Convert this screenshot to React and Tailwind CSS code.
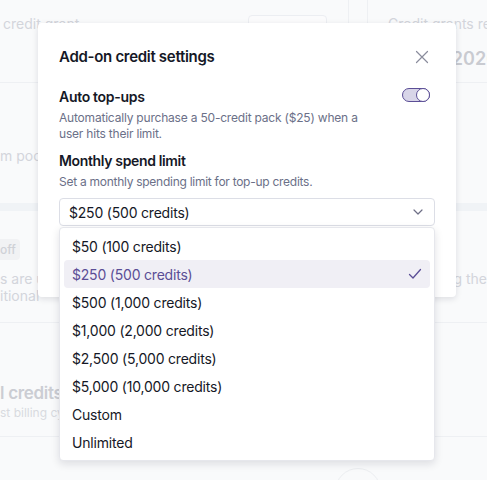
import React from "react";

const options = [
  "$50 (100 credits)",
  "$250 (500 credits)",
  "$500 (1,000 credits)",
  "$1,000 (2,000 credits)",
  "$2,500 (5,000 credits)",
  "$5,000 (10,000 credits)",
  "Custom",
  "Unlimited",
];

function Check() {
  return (
    <svg width="14" height="14" viewBox="0 0 14 14" fill="none" stroke="#5b4e96" strokeWidth="1.3" strokeLinecap="round" strokeLinejoin="round">
      <path d="M1.5 7.5 L5 11 L12.5 2.5" />
    </svg>
  );
}

export default function App() {
  const selected = "$250 (500 credits)";

  return (
    <div className="relative h-[480px] w-[487px] overflow-hidden bg-[#f9fafb] font-['Inter',sans-serif]">
      {/* faded page behind the dialog */}
      <div className="flex h-[83px] border-b border-[#eef0f3]">
        <div className="flex w-[349px] shrink-0 items-start justify-between border-r border-[#eef0f3] pr-[21px] pt-[13px]">
          <span className="ml-[3px] text-[14px] text-[#d3d5db]">credit grant</span>
          <div className="mt-[2px] h-[22px] w-[79px] rounded border border-[#eceef2] bg-[#fbfbfc]" />
        </div>
        <div className="w-[19px] shrink-0 border-r border-[#eef0f3]" />
        <div className="flex flex-col pl-[20px] pt-[13px]">
          <span className="whitespace-nowrap text-[14px] text-[#d3d5db]">Credit grants reset</span>
          <span className="ml-[10px] mt-[11px] whitespace-nowrap text-[18px] font-semibold text-[#c9cbd1]">Jan 1, 2026</span>
        </div>
      </div>

      <div className="h-[120px] pt-[60px]">
        <span className="text-[14px] text-[#d3d5db]">m pool</span>
      </div>

      <div className="h-[8px] bg-[#f0f3f6]" />

      <div className="h-[112px] border-b border-[#eef0f3] pt-[25px]">
        <span className="inline-block h-[21px] rounded-r bg-[#f1f2f4] pr-[4px] text-[12px] leading-[21px] font-medium text-[#cfd1d7]">off</span>
        <div className="mt-[10px] flex justify-between text-[14px] leading-[17px] text-[#d3d5db]">
          <span>s are u</span>
          <span className="whitespace-nowrap">g the</span>
        </div>
        <div className="text-[14px] leading-[17px] text-[#d3d5db]">itional</div>
      </div>

      <div className="h-[114px] border-b border-[#eef0f3] pt-[59px]">
        <div className="text-[17px] leading-[22px] font-semibold tracking-[-0.3px] text-[#cbcdd3]">l credits</div>
        <div className="mt-[1px] text-[12px] leading-[16px] text-[#d8dadf]">st billing cy</div>
      </div>

      <div className="pl-[335px] pt-[31px]">
        <div className="h-[46px] w-[46px] rounded-full border border-[#eceef1]" />
      </div>

      {/* dialog */}
      <div className="absolute left-[38px] top-[23px] h-[274px] w-[418px] rounded-[4px] bg-white px-[21px] pt-[21px] shadow-[0_2px_6px_rgba(20,20,40,0.12)]">
        <div className="flex items-center justify-between">
          <h2 className="text-[15px] leading-[26px] font-semibold tracking-[-0.3px] text-[#151826]">Add-on credit settings</h2>
          <svg width="14" height="14" viewBox="0 0 14 14" className="mr-[6px]" stroke="#8a8c9c" strokeWidth="1.2" strokeLinecap="round">
            <path d="M1.5 1.5 L12.5 12.5 M12.5 1.5 L1.5 12.5" />
          </svg>
        </div>

        <div className="mt-[17px] flex items-start justify-between">
          <div>
            <div className="text-[14px] leading-[20px] font-semibold tracking-[-0.3px] text-[#151826]">Auto top-ups</div>
            <p className="mt-[3px] w-[300px] text-[12px] leading-[16px] tracking-[-0.2px] text-[#6b7088]">
              Automatically purchase a 50-credit pack ($25) when a user hits their limit.
            </p>
          </div>
          <div className="mr-[5px] mt-[1px] flex h-[14px] w-[28px] items-center justify-end rounded-full border border-[#5b4e96] bg-[#d8d5e8]">
            <div className="-mr-px h-[14px] w-[14px] rounded-full border border-[#5b4e96] bg-white" />
          </div>
        </div>

        <div className="mt-[9px] text-[14px] leading-[20px] font-semibold tracking-[-0.35px] text-[#151826]">Monthly spend limit</div>
        <p className="mt-[3px] text-[12px] leading-[16px] tracking-[-0.27px] text-[#6b7088]">Set a monthly spending limit for top-up credits.</p>

        <div className="mt-[8px] flex h-[28px] items-center justify-between rounded-[4px] border border-[#dcdee6] pl-[9px] pr-[11px]">
          <span className="text-[14px] tracking-[-0.2px] text-[#151826]">{selected}</span>
          <svg width="10" height="6" viewBox="0 0 10 6" fill="none" stroke="#6e6f86" strokeWidth="1.2" strokeLinecap="round" strokeLinejoin="round">
            <path d="M1 1 L5 5 L9 1" />
          </svg>
        </div>
      </div>

      {/* open select menu */}
      <ul className="absolute left-[59px] top-[227px] w-[376px] rounded-[4px] border border-[#e6e7ec] bg-white p-1 shadow-[0_3px_8px_rgba(20,20,40,0.12)]">
        {options.map((o) => {
          const on = o === selected;
          return (
            <li
              key={o}
              className={
                "flex h-[28px] items-center justify-between rounded-[4px] pl-2 pr-[8px] text-[14px] tracking-[-0.2px] " +
                (on ? "bg-[#f0eff5] text-[#5b4e96]" : "text-[#151826]")
              }
            >
              <span>{o}</span>
              {on && <Check />}
            </li>
          );
        })}
      </ul>
    </div>
  );
}
